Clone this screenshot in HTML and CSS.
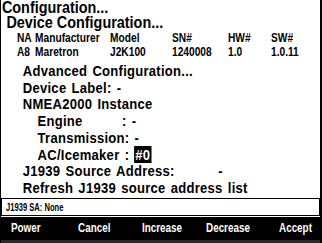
FILE: index.html
```html
<!DOCTYPE html>
<html lang="en">

<head>
    <title>Configuration</title>
    <link rel="stylesheet" href="styles.css">
</head>

<body>
    <div class="screen">
        <div class="title">Configuration...</div>
        <div class="subtitle">Device Configuration...</div>
        <div class="table">
            <span>NA</span><span>Manufacturer</span><span>Model</span><span>SN#</span><span>HW#</span><span>SW#</span>
            <span>A8</span><span>Maretron</span><span>J2K100</span><span>1240008</span><span>1.0</span><span>1.0.11</span>
        </div>
        <div class="menu">
            <div class="item">Advanced Configuration...</div>
            <div class="item">Device Label: -</div>
            <div class="item">NMEA2000 Instance</div>
            <div class="item sub"><span class="label">Engine</span>: -</div>
            <div class="item sub"><span class="label">Transmission</span>: -</div>
            <div class="item sub"><span class="label">AC/Icemaker&nbsp;</span>: <span class="sel">#0</span></div>
            <div class="item">J1939 Source Address: <span class="gap">-</span></div>
            <div class="item">Refresh J1939 source address list</div>
        </div>
        <div class="status"><span>J1939 SA: None</span></div>
        <div class="keys">
            <span>Power</span>
            <span>Cancel</span>
            <span>Increase</span>
            <span>Decrease</span>
            <span>Accept</span>
        </div>
    </div>
</body>

</html>
```

FILE: styles.css
```css
body {
    margin: 0;
    padding: 0;
    background: #fff;
    font-family: "Liberation Sans", Arial, sans-serif;
    font-weight: bold;
    color: #000;
}

/* whole device screen */
.screen {
    width: 319px;
    height: 243px;
    border-left: 1px solid #000;
    border-right: 2px solid #000;
    display: flex;
    flex-direction: column;
    overflow: hidden;
}

/* the lcd font is narrow, so squeeze the text sideways */
.title,
.subtitle,
.menu {
    transform: scaleX(0.9);
    transform-origin: left top;
}

.title {
    font-size: 16px;
    line-height: 14px;
    padding: 1px 0 0 1px;
}

.subtitle {
    font-size: 16px;
    line-height: 15px;
    padding-left: 6px;
}

.table {
    display: grid;
    grid-template-columns: 18px 75px 62px 56px 43px auto;
    row-gap: 3px;
    padding: 3px 0 0 16px;
    font-size: 12px;
    line-height: 11px;
}

.table span {
    display: inline-block;
    transform: scaleX(0.85);
    transform-origin: left;
    white-space: nowrap;
}

.menu {
    transform: scaleX(0.87);
    padding: 5px 0 0 25px;
    font-size: 15px;
    line-height: 16.7px;
    letter-spacing: 0.3px;
    word-spacing: 1.5px;
}

.item.sub {
    padding-left: 17px;
}

.label {
    display: inline-block;
    min-width: 97px;
}

.gap {
    margin-left: 44px;
}

.sel {
    background: #000;
    color: #fff;
    padding: 0 1px;
}

.status {
    margin-top: 1px;
    height: 16px;
    border: 1px solid #000;
    font-size: 11.5px;
    line-height: 16px;
    padding-left: 4px;
}

.status span {
    display: inline-block;
    transform: scaleX(0.66);
    transform-origin: left;
    white-space: nowrap;
}

.keys {
    flex: 1;
    margin-top: 1px;
    padding: 4px 0 0 10px;
    background: #000;
    border-bottom: 3px solid #2a2a2a;
    color: #fff;
    display: grid;
    grid-template-columns: 67px 64px 64px 73px auto;
    align-items: start;
    font-size: 13px;
    line-height: 14px;
}

.keys span {
    display: inline-block;
    transform: scaleX(0.76);
    transform-origin: left;
    white-space: nowrap;
}
```
